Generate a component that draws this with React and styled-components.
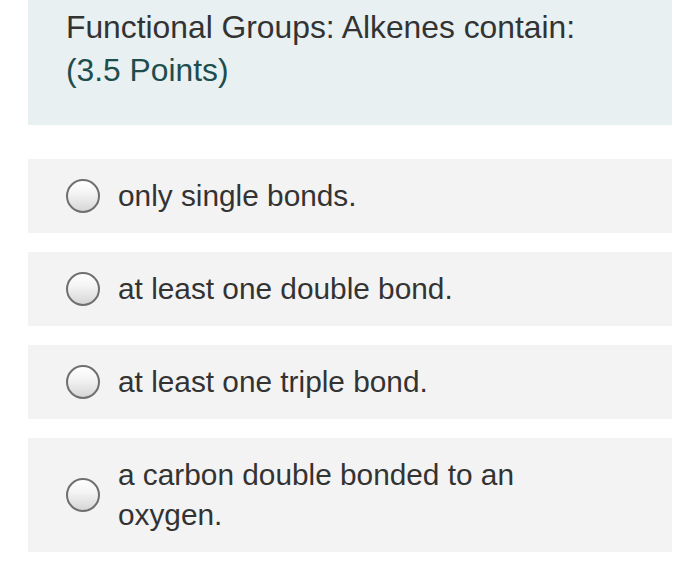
import React from "react";
import styled, { createGlobalStyle } from "styled-components";

const GlobalStyle = createGlobalStyle`
  body {
    margin: 0;
    background: #ffffff;
    font-family: "Liberation Sans", Arial, Helvetica, sans-serif;
  }
`;

const Page = styled.div`
  width: 700px;
  padding: 0 28px;
  box-sizing: border-box;
`;

const Header = styled.div`
  background: #e8f0f2;
  padding: 6px 38px 33px;
  height: 125px;
  box-sizing: border-box;
  font-size: 31.8px;
  line-height: 43px;
  color: #333333;
`;

const Points = styled.div`
  color: #1e4d4d;
`;

const Options = styled.div`
  display: flex;
  flex-direction: column;
  gap: 19px;
  margin-top: 34px;
`;

const Option = styled.label`
  display: flex;
  align-items: center;
  gap: 18px;
  background: #f3f3f3;
  padding: 17px 38px;
  font-size: 29.8px;
  line-height: 40px;
  color: #333333;
`;

const Radio = styled.span`
  flex: none;
  width: 30px;
  height: 30px;
  border-radius: 50%;
  border: 2px solid #6f6f6f;
  background: linear-gradient(to bottom, #ffffff 0%, #f4f4f4 40%, #d6d6d6 100%);
`;

const Text = styled.span`
  max-width: 420px;
`;

const answers = [
  "only single bonds.",
  "at least one double bond.",
  "at least one triple bond.",
  "a carbon double bonded to an oxygen.",
];

export default function App() {
  return (
    <Page>
      <GlobalStyle />
      <Header>
        <div>Functional Groups: Alkenes contain:</div>
        <Points>(3.5 Points)</Points>
      </Header>
      <Options>
        {answers.map((a) => (
          <Option key={a}>
            <Radio />
            <Text>{a}</Text>
          </Option>
        ))}
      </Options>
    </Page>
  );
}
